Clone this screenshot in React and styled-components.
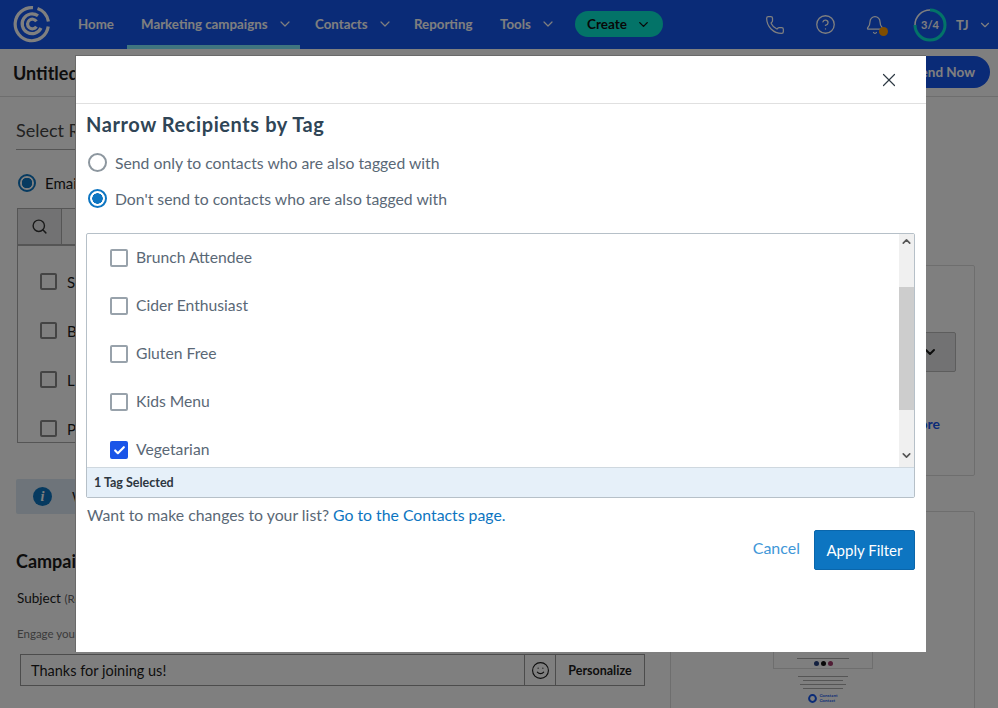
import React from 'react';
import styled, { createGlobalStyle } from 'styled-components';
import { ChevronDown, ChevronUp, Phone, CircleHelp, Bell, X, Search, Smile, Check } from 'lucide-react';

const GlobalStyle = createGlobalStyle`
  html, body { margin: 0; padding: 0; background: #fff; }
  * { box-sizing: border-box; }
  body { font-family: Lato, "Liberation Sans", sans-serif; }
`;

const tags = [
  { name: 'Brunch Attendee' },
  { name: 'Cider Enthusiast' },
  { name: 'Gluten Free' },
  { name: 'Kids Menu' },
  { name: 'Vegetarian', checked: true },
];

function Logo() {
  return (
    <svg width="38" height="38" viewBox="0 0 38 38" fill="none" stroke="#fff" strokeWidth="3.2">
      <path d="M24.5 3.4 A16.5 16.5 0 0 1 35.4 16.5" />
      <path d="M35.2 21.5 A16.6 16.6 0 1 1 20 2.6" />
      <path d="M28 23 A9.9 9.9 0 1 1 25 10.8" />
      <path d="M23.4 21.6 A4.8 4.8 0 1 1 23.4 16.4" />
    </svg>
  );
}

function Progress() {
  return (
    <svg width="34" height="34" viewBox="0 0 34 34" fill="none" strokeWidth="3">
      <circle cx="17" cy="17" r="15" stroke="#fff" strokeWidth="1.5" />
      <path d="M17 2 A15 15 0 1 1 2 17" stroke="#07e6d0" />
    </svg>
  );
}

export default function App() {
  return (
    <Page>
      <GlobalStyle />
      <TopBar>
        <LogoSlot><Logo /></LogoSlot>
        <NavItem $width={65} $pad={16}>Home</NavItem>
        <NavItem $active $width={173} $pad={14}>Marketing campaigns<Chevron size={16} /></NavItem>
        <NavItem $width={114} $pad={15}>Contacts<Chevron size={16} /></NavItem>
        <NavItem $width={86} $pad={0}>Reporting</NavItem>
        <NavItem $width={75} $pad={0}>Tools<Chevron size={16} /></NavItem>
        <CreateButton>Create<ChevronDown size={15} strokeWidth={2.2} /></CreateButton>
        <TopIcons>
          <IconSlot><Phone size={20} strokeWidth={1.5} /></IconSlot>
          <IconSlot><CircleHelp size={21} strokeWidth={1.5} /></IconSlot>
          <IconSlot>
            <Bell size={20} strokeWidth={1.5} />
            <BellDot />
          </IconSlot>
          <RingSlot>
            <Progress />
            <RingText>3/4</RingText>
          </RingSlot>
          <Initials>TJ<ChevronDown size={14} strokeWidth={2} /></Initials>
        </TopIcons>
      </TopBar>

      <TitleBar>
        <PageTitle>Untitled</PageTitle>
        <SendButton>Send Now</SendButton>
      </TitleBar>

      <Body>
        <LeftColumn>
          <SectionTitle>Select Recipients</SectionTitle>
          <EmailRow><DimRadio />Email</EmailRow>
          <SearchBox>
            <SearchAddon><Search size={17} strokeWidth={2} /></SearchAddon>
          </SearchBox>
          <BackList>
            <BackRow><BackCheck />Subscribers</BackRow>
            <BackRow><BackCheck />Brunch</BackRow>
            <BackRow><BackCheck />Lists</BackRow>
            <BackRow><BackCheck />Promo</BackRow>
          </BackList>
          <InfoBanner><InfoDot>i</InfoDot>We</InfoBanner>
          <CampaignTitle>Campaign</CampaignTitle>
          <SubjectLabel>Subject <small>(Required)</small></SubjectLabel>
          <Hint>Engage your readers</Hint>
          <SubjectInput>
            <InputText>Thanks for joining us!</InputText>
            <EmojiCell><Smile size={19} strokeWidth={1.4} /></EmojiCell>
            <PersonalizeCell>Personalize</PersonalizeCell>
          </SubjectInput>
        </LeftColumn>
        <RightColumn>
          <SideCard $height={211}>
            <SideSelect><ChevronDown size={16} strokeWidth={3} /></SideSelect>
            <SideLink>more</SideLink>
          </SideCard>
          <PreviewCard>
            <Thumb>
              <ThumbBox>
                <ThumbLine $w={52} />
                <Dots><Dot $c="#27417f" /><Dot $c="#111" /><Dot $c="#a03a6a" /></Dots>
              </ThumbBox>
              <ThumbLine $w={50} />
              <ThumbLine $w={40} />
              <ThumbLine $w={46} />
              <ThumbLine $w={40} />
              <ThumbLogo>
                <svg width="9" height="9" viewBox="0 0 9 9" fill="none" stroke="#1556ee" strokeWidth="2">
                  <circle cx="4.5" cy="4.5" r="3.4" />
                </svg>
                <span>Constant<br />Contact</span>
              </ThumbLogo>
            </Thumb>
          </PreviewCard>
        </RightColumn>
      </Body>

      <Overlay />

      <Modal>
        <ModalHead>
          <CloseButton><X size={22} strokeWidth={1.3} /></CloseButton>
        </ModalHead>
        <ModalBody>
          <ModalTitle>Narrow Recipients by Tag</ModalTitle>
          <RadioRow><Radio />Send only to contacts who are also tagged with</RadioRow>
          <RadioRow><Radio $on />Don't send to contacts who are also tagged with</RadioRow>
          <TagBox>
            <TagScroll>
              <TagList>
                {tags.map((t) => (
                  <TagRow key={t.name}>
                    <CheckBox $on={t.checked}>
                      {t.checked && <Check size={13} strokeWidth={4} color="#fff" />}
                    </CheckBox>
                    <TagName>{t.name}</TagName>
                  </TagRow>
                ))}
              </TagList>
              <ScrollBar>
                <ScrollArrow><ChevronUp size={13} strokeWidth={3} /></ScrollArrow>
                <ScrollTrack $h={38} />
                <ScrollThumb />
                <ScrollTrack $h={38} />
                <ScrollArrow><ChevronDown size={13} strokeWidth={3} /></ScrollArrow>
              </ScrollBar>
            </TagScroll>
            <TagFooter>1 Tag Selected</TagFooter>
          </TagBox>
          <ChangeNote>Want to make changes to your list? <ModalLink>Go to the Contacts page.</ModalLink></ChangeNote>
          <ModalActions>
            <CancelLink>Cancel</CancelLink>
            <ApplyButton>Apply Filter</ApplyButton>
          </ModalActions>
        </ModalBody>
      </Modal>
    </Page>
  );
}

// styling Components

const Page = styled.div`
  position: relative;
  width: 998px;
  height: 708px;
  overflow: hidden;
  background: #fff;
  color: #1b1b1b;
`;

const TopBar = styled.header`
  height: 49px;
  background: #1556ee;
  display: flex;
  align-items: stretch;
  color: #fff;
  font-size: 13.3px;
  font-weight: 700;
`;

const LogoSlot = styled.div`
  width: 62px;
  padding: 5px 0 0 13px;
`;

const NavItem = styled.div`
  width: ${(p) => p.$width}px;
  padding: 0 0 1px ${(p) => p.$pad}px;
  display: flex;
  align-items: center;
  flex: none;
  white-space: nowrap;
  border-bottom: 4px solid ${(p) => (p.$active ? '#7fe9ff' : 'transparent')};
  border-top: 4px solid transparent;
`;

const Chevron = styled(ChevronDown)`
  margin-left: 9px;
  stroke-width: 1.8;
`;

const CreateButton = styled.div`
  width: 88px;
  height: 26px;
  margin: 11px 0 0 0;
  border-radius: 13px;
  background: #07e6d0;
  color: #111;
  display: flex;
  align-items: center;
  justify-content: center;
  gap: 9px;
  font-size: 13.5px;
`;

const TopIcons = styled.div`
  display: flex;
  align-items: center;
  margin-left: 87px;
`;

const IconSlot = styled.div`
  position: relative;
  width: 50px;
  display: flex;
  justify-content: center;
`;

const BellDot = styled.span`
  position: absolute;
  right: 12px;
  bottom: -1px;
  width: 9px;
  height: 9px;
  border-radius: 50%;
  background: #ff9a00;
`;

const RingSlot = styled.div`
  position: relative;
  width: 34px;
  height: 34px;
  margin-left: 13px;
`;

const RingText = styled.span`
  position: absolute;
  inset: 0;
  display: flex;
  align-items: center;
  justify-content: center;
  font-size: 11px;
`;

const Initials = styled.div`
  display: flex;
  align-items: center;
  gap: 9px;
  margin-left: 9px;
  font-size: 13px;
`;

const TitleBar = styled.div`
  height: 48px;
  border-bottom: 1px solid #ddd;
  display: flex;
  align-items: center;
  justify-content: space-between;
  padding: 0 8px 0 13px;
`;

const PageTitle = styled.div`
  font-size: 18px;
  font-weight: 700;
`;

const SendButton = styled.div`
  width: 130px;
  height: 32px;
  border-radius: 16px;
  background: #1556ee;
  color: #fff;
  font-size: 13.5px;
  font-weight: 700;
  display: flex;
  align-items: center;
  justify-content: flex-end;
  padding-right: 15px;
  margin-top: -1px;
`;

const Body = styled.main`
  display: flex;
`;

const LeftColumn = styled.div`
  width: 670px;
  flex: none;
  padding: 22px 25px 0 16px;
`;

const SectionTitle = styled.div`
  font-size: 18px;
  color: #444;
  height: 31px;
  border-bottom: 1px solid #aaa;
`;

const EmailRow = styled.div`
  display: flex;
  align-items: center;
  gap: 9px;
  margin: 23px 0 0 2px;
  height: 20px;
  font-size: 15px;
`;

const DimRadio = styled.span`
  width: 18px;
  height: 18px;
  border-radius: 50%;
  border: 2px solid #0d75c1;
  background: radial-gradient(circle, #0d75c1 0 5px, #fff 5.5px);
`;

const SearchBox = styled.div`
  height: 38px;
  margin: 15px 0 0 1px;
  border: 1px solid #aaa;
  border-bottom: 2px solid #aaa;
  background: #f3f3f3;
`;

const SearchAddon = styled.div`
  width: 44px;
  height: 100%;
  border-right: 1px solid #aaa;
  background: #e4e5e6;
  display: flex;
  align-items: center;
  justify-content: center;
  color: #333;
`;

const BackList = styled.div`
  margin-left: 1px;
  height: 197px;
  border: 1px solid #aaa;
  border-top: 0;
  padding: 11px 0 0 22px;
`;

const BackRow = styled.div`
  height: 49px;
  display: flex;
  align-items: center;
  gap: 10px;
  font-size: 15px;
`;

const BackCheck = styled.span`
  width: 17px;
  height: 17px;
  border: 2px solid #888;
  border-radius: 2px;
`;

const InfoBanner = styled.div`
  margin-top: 36px;
  height: 35px;
  background: #dce9f4;
  border-radius: 2px;
  display: flex;
  align-items: center;
  gap: 20px;
  padding-left: 17px;
  font-size: 14px;
`;

const InfoDot = styled.span`
  width: 19px;
  height: 19px;
  border-radius: 50%;
  background: #0d75c1;
  color: #fff;
  font: italic 700 14px "Liberation Serif", serif;
  display: flex;
  align-items: center;
  justify-content: center;
`;

const CampaignTitle = styled.div`
  margin-top: 36px;
  font-size: 18px;
  font-weight: 700;
`;

const SubjectLabel = styled.div`
  margin: 18px 0 0 1px;
  font-size: 13.5px;
  small { font-size: 11.5px; color: #666; }
`;

const Hint = styled.div`
  margin: 21px 0 0 1px;
  font-size: 11.5px;
  color: #777;
`;

const SubjectInput = styled.div`
  margin: 14px 0 0 4px;
  height: 32px;
  width: 625px;
  border: 1.5px solid #999;
  display: flex;
  align-items: center;
`;

const InputText = styled.div`
  flex: 1;
  padding-left: 10px;
  font-size: 14.5px;
`;

const EmojiCell = styled.div`
  width: 31px;
  height: 100%;
  border-left: 1px solid #999;
  display: flex;
  align-items: center;
  justify-content: center;
`;

const PersonalizeCell = styled.div`
  width: 89px;
  height: 100%;
  border-left: 1px solid #999;
  display: flex;
  align-items: center;
  justify-content: center;
  font-size: 12.5px;
  font-weight: 700;
`;

const RightColumn = styled.div`
  width: 305px;
  flex: none;
  padding-top: 168px;
`;

const SideCard = styled.div`
  height: ${(p) => p.$height}px;
  border: 1px solid #ddd;
  border-radius: 2px;
  padding: 66px 18px 0 20px;
`;

const SideSelect = styled.div`
  height: 40px;
  border: 1px solid #bbb;
  border-radius: 2px;
  background: #e4e5e6;
  display: flex;
  align-items: center;
  justify-content: flex-end;
  padding-right: 17px;
`;

const SideLink = styled.div`
  margin-top: 43px;
  text-align: right;
  color: #1556ee;
  font-size: 14px;
  font-weight: 700;
  padding-right: 16px;
`;

const PreviewCard = styled.div`
  margin-top: 35px;
  height: 220px;
  border: 1px solid #ddd;
  border-radius: 2px;
  padding-left: 85px;
`;

const Thumb = styled.div`
  width: 134px;
  height: 220px;
  padding-top: 128px;
  display: flex;
  flex-direction: column;
  align-items: center;
  gap: 3px;
`;

const ThumbBox = styled.div`
  width: 100px;
  height: 29px;
  border: 1px solid #ddd;
  margin-bottom: 4px;
  display: flex;
  flex-direction: column;
  align-items: center;
  justify-content: flex-end;
  gap: 2px;
  padding-bottom: 2px;
`;

const ThumbLine = styled.div`
  width: ${(p) => p.$w}px;
  height: 1px;
  background: #aaa;
`;

const Dots = styled.div`
  display: flex;
  gap: 2px;
`;

const Dot = styled.span`
  width: 5px;
  height: 5px;
  border-radius: 50%;
  background: ${(p) => p.$c};
`;

const ThumbLogo = styled.div`
  margin-top: 2px;
  display: flex;
  align-items: center;
  gap: 2px;
  font-size: 4.5px;
  line-height: 4.5px;
  font-weight: 700;
  color: #1556ee;
`;

const Overlay = styled.div`
  position: absolute;
  inset: 0;
  background: rgba(0, 0, 0, 0.5);
`;

const Modal = styled.section`
  position: absolute;
  left: 75px;
  top: 55px;
  width: 851px;
  height: 597px;
  background: #fff;
  border: 1px solid #6a6a6a;
  border-right: 0;
  border-bottom: 0;
  color: #5a6876;
`;

const ModalHead = styled.div`
  height: 48px;
  border-bottom: 1px solid #e0e0e0;
  display: flex;
  align-items: center;
  justify-content: flex-end;
  padding-right: 26px;
`;

const CloseButton = styled.div`
  color: #2f3a44;
  display: flex;
`;

const ModalBody = styled.div`
  padding: 8px 10px 0 10px;
`;

const ModalTitle = styled.h2`
  margin: 0;
  font-size: 20px;
  line-height: 24px;
  font-weight: 700;
  letter-spacing: 0.58px;
  color: #2f4556;
`;

const RadioRow = styled.div`
  display: flex;
  align-items: center;
  gap: 8px;
  font-size: 15.75px;
  height: 35.5px;
  padding-left: 2px;
  &:first-of-type { margin-top: 9px; }
`;

const Radio = styled.span`
  width: 19px;
  height: 19px;
  border-radius: 50%;
  border: 2px solid ${(p) => (p.$on ? '#0d75c1' : '#8d979f')};
  background: ${(p) => (p.$on ? 'radial-gradient(circle, #0d75c1 0 5px, #fff 5.5px)' : '#fff')};
`;

const TagBox = styled.div`
  margin-top: 17px;
  width: 829px;
  height: 265px;
  border: 1px solid #b6c0c8;
  border-radius: 2px;
  display: flex;
  flex-direction: column;
`;

const TagScroll = styled.div`
  height: 233px;
  display: flex;
  overflow: hidden;
`;

const TagList = styled.div`
  flex: 1;
  padding: 0 0 0 23px;
`;

const TagRow = styled.div`
  height: 48px;
  display: flex;
  align-items: center;
  gap: 8px;
  font-size: 15.7px;
`;

const TagName = styled.span`
  margin-top: -3px;
`;

const CheckBox = styled.span`
  width: 18px;
  height: 18px;
  border-radius: 2px;
  border: 2px solid ${(p) => (p.$on ? '#1a55e8' : '#98a2ab')};
  background: ${(p) => (p.$on ? '#1a55e8' : '#fff')};
  display: flex;
  align-items: center;
  justify-content: center;
`;

const ScrollBar = styled.div`
  width: 15px;
  flex: none;
  display: flex;
  flex-direction: column;
  background: #f0f0f0;
  color: #555;
`;

const ScrollArrow = styled.div`
  height: 15px;
  display: flex;
  align-items: center;
  justify-content: center;
`;

const ScrollTrack = styled.div`
  height: ${(p) => p.$h}px;
`;

const ScrollThumb = styled.div`
  height: 123px;
  background: #cdcdcd;
`;

const TagFooter = styled.div`
  flex: 1;
  background: #e6f0f9;
  border-top: 1px solid #cfd8df;
  display: flex;
  align-items: center;
  padding-left: 7px;
  font-size: 12.5px;
  font-weight: 700;
  color: #2d3640;
`;

const ChangeNote = styled.div`
  margin-top: 7px;
  padding-left: 1px;
  font-size: 15.8px;
  line-height: 20px;
`;

const ModalLink = styled.a`
  color: #0d75c1;
`;

const ModalActions = styled.div`
  display: flex;
  justify-content: flex-end;
  align-items: flex-start;
  gap: 14px;
  width: 829px;
  margin-top: 5px;
`;

const CancelLink = styled.a`
  color: #3f97d8;
  font-size: 16px;
  line-height: 36px;
`;

const ApplyButton = styled.div`
  width: 101px;
  height: 40px;
  background: #0d75c1;
  border: 1px solid #0a66ab;
  border-radius: 2px;
  color: #fff;
  font-size: 15px;
  display: flex;
  align-items: center;
  justify-content: center;
`;
